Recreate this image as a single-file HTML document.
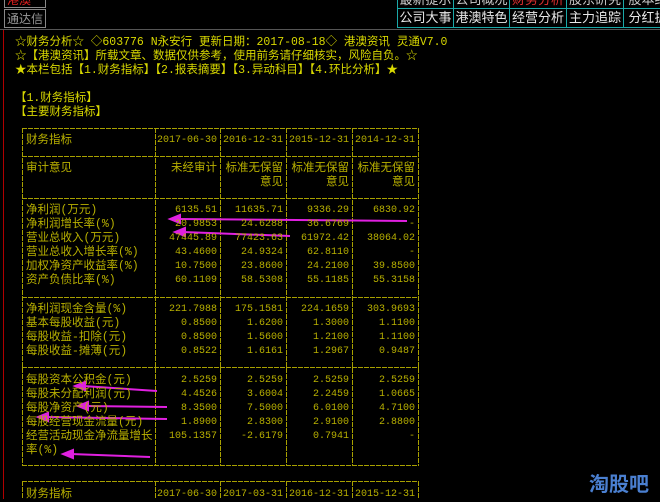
<!DOCTYPE html><html><head><meta charset="utf-8"><style>
body{margin:0;width:660px;height:499px;background:#000;overflow:hidden;position:relative;font-family:"Liberation Mono","Noto Sans CJK SC",monospace}
.t{position:absolute;white-space:nowrap;font-size:11.5px;line-height:14px;color:#d8d800}
.c{color:#b8b000}
.r{text-align:right;font-size:10px}
.r b{font-weight:normal;font-size:11.5px}
.tab{position:absolute;border:1px solid #1aa8a8;color:#e8e8e8;font-family:"Liberation Sans","Noto Sans CJK SC",sans-serif;font-size:13px;text-align:center;line-height:18px;box-sizing:border-box}
</style></head><body>
<div style="position:absolute;left:4px;top:-6px;width:38px;height:12px;border:1px solid #888;color:#e02020;font-size:12px;line-height:10px;font-family:'Noto Sans CJK SC',sans-serif;padding-left:2px">港澳</div>
<div style="position:absolute;left:4px;top:9px;width:38px;height:17px;border:1px solid #888;color:#999;font-size:12px;line-height:17px;font-family:'Noto Sans CJK SC',sans-serif;padding-left:2px">通达信</div>
<div style="position:absolute;left:0;top:29px;width:660px;height:1px;background:#555"></div>
<div style="position:absolute;left:3px;top:30px;width:1px;height:469px;background:#b00000"></div>
<div class="tab" style="left:397px;top:-10px;width:57px;height:19px;color:#ccc">最新提示</div>
<div class="tab" style="left:453px;top:-10px;width:57px;height:19px;color:#ccc">公司概况</div>
<div class="tab" style="left:509px;top:-10px;width:58px;height:19px;color:#e03030">财务分析</div>
<div class="tab" style="left:566px;top:-10px;width:58px;height:19px;color:#ccc">股东研究</div>
<div class="tab" style="left:623px;top:-10px;width:50px;height:19px;color:#ccc">股本结</div>
<div class="tab" style="left:397px;top:8px;width:57px;height:20px">公司大事</div>
<div class="tab" style="left:453px;top:8px;width:57px;height:20px">港澳特色</div>
<div class="tab" style="left:509px;top:8px;width:58px;height:20px">经营分析</div>
<div class="tab" style="left:566px;top:8px;width:58px;height:20px">主力追踪</div>
<div class="tab" style="left:623px;top:8px;width:50px;height:20px">分红扩</div>

<div class="t" style="left:15px;top:36px">☆财务分析☆ ◇603776 N永安行 更新日期：2017-08-18◇ 港澳资讯 灵通V7.0</div>
<div class="t" style="left:15px;top:50px">☆【港澳资讯】所载文章、数据仅供参考，使用前务请仔细核实，风险自负。☆</div>
<div class="t" style="left:15px;top:64px">★本栏包括【1.财务指标】【2.报表摘要】【3.异动科目】【4.环比分析】★</div>
<div class="t" style="left:15px;top:92px">【1.财务指标】</div>
<div class="t" style="left:15px;top:106px">【主要财务指标】</div>

<svg style="position:absolute;left:0;top:0" width="660" height="499">
<g stroke="#a8a000" stroke-width="1" fill="none" stroke-dasharray="5,1">
<line x1="22" y1="128.5" x2="419" y2="128.5"/>
<line x1="22" y1="156.5" x2="419" y2="156.5"/>
<line x1="22" y1="198.5" x2="419" y2="198.5"/>
<line x1="22" y1="297.5" x2="419" y2="297.5"/>
<line x1="22" y1="367.5" x2="419" y2="367.5"/>
<line x1="22" y1="465.5" x2="419" y2="465.5"/>
<line x1="22" y1="481.5" x2="419" y2="481.5"/>
<line x1="22.5" y1="128" x2="22.5" y2="466"/><line x1="155.5" y1="128" x2="155.5" y2="466"/>
<line x1="220.5" y1="128" x2="220.5" y2="466"/><line x1="286.5" y1="128" x2="286.5" y2="466"/>
<line x1="352.5" y1="128" x2="352.5" y2="466"/><line x1="418.5" y1="128" x2="418.5" y2="466"/>
<line x1="22.5" y1="481" x2="22.5" y2="499"/><line x1="155.5" y1="481" x2="155.5" y2="499"/>
<line x1="220.5" y1="481" x2="220.5" y2="499"/><line x1="286.5" y1="481" x2="286.5" y2="499"/>
<line x1="352.5" y1="481" x2="352.5" y2="499"/><line x1="418.5" y1="481" x2="418.5" y2="499"/>
</g>
<g stroke="#e020e0" stroke-width="2" fill="#e020e0">
<line x1="407" y1="221" x2="178" y2="219"/><polygon points="170,219 180,215 180,223"/>
<line x1="290" y1="236" x2="183" y2="232"/><polygon points="175,232 185,228 185,236"/>
<line x1="157" y1="391" x2="83" y2="386"/><polygon points="75,386 85,382 85,390"/>
<line x1="167" y1="407" x2="86" y2="406"/><polygon points="78,406 88,402 88,410"/>
<line x1="167" y1="419" x2="46" y2="417"/><polygon points="38,417 48,413 48,421"/>
<line x1="150" y1="457" x2="71" y2="454"/><polygon points="63,454 73,450 73,458"/>
</g>
</svg>
<div style="position:absolute;left:589px;top:472px;color:#4a7fd0;font-family:'Noto Sans CJK SC',sans-serif;font-weight:bold;font-size:20px;line-height:22px">淘股吧</div>

<div id="rows"></div>
<script>
var R=[
[134,"财务指标","2017-06-30","2016-12-31","2015-12-31","2014-12-31",1],
[162,"审计意见","<b>未经审计</b>","<b>标准无保留</b>","<b>标准无保留</b>","<b>标准无保留</b>"],
[176,"","","<b>意见</b>","<b>意见</b>","<b>意见</b>"],
[204,"净利润(万元)","6135.51","11635.71","9336.29","6830.92"],
[218,"净利润增长率(%)","20.9853","24.6288","36.6769","-"],
[232,"营业总收入(万元)","47445.89","77423.63","61972.42","38064.02"],
[246,"营业总收入增长率(%)","43.4600","24.9324","62.8110","-"],
[260,"加权净资产收益率(%)","10.7500","23.8600","24.2100","39.8500"],
[274,"资产负债比率(%)","60.1109","58.5308","55.1185","55.3158"],
[303,"净利润现金含量(%)","221.7988","175.1581","224.1659","303.9693"],
[317,"基本每股收益(元)","0.8500","1.6200","1.3000","1.1100"],
[331,"每股收益-扣除(元)","0.8500","1.5600","1.2100","1.1100"],
[345,"每股收益-摊薄(元)","0.8522","1.6161","1.2967","0.9487"],
[374,"每股资本公积金(元)","2.5259","2.5259","2.5259","2.5259"],
[388,"每股未分配利润(元)","4.4526","3.6004","2.2459","1.0665"],
[402,"每股净资产(元)","8.3500","7.5000","6.0100","4.7100"],
[416,"每股经营现金流量(元)","1.8900","2.8300","2.9100","2.8800"],
[430,"经营活动现金净流量增长","105.1357","-2.6179","0.7941","-"],
[444,"率(%)","","","",""],
[488,"财务指标","2017-06-30","2017-03-31","2016-12-31","2015-12-31",1]];
var rx=[155,220,286,352,418],h="";
R.forEach(function(r){h+='<div class="t c" style="left:26px;top:'+r[0]+'px">'+r[1]+'</div>';
for(var i=0;i<4;i++)h+='<div class="t c r" style="left:'+(rx[i]+1)+'px;width:'+(rx[i+1]-rx[i]-4)+'px;top:'+r[0]+'px">'+r[i+2]+'</div>';});
document.getElementById("rows").innerHTML=h;
</script>
</body></html>
